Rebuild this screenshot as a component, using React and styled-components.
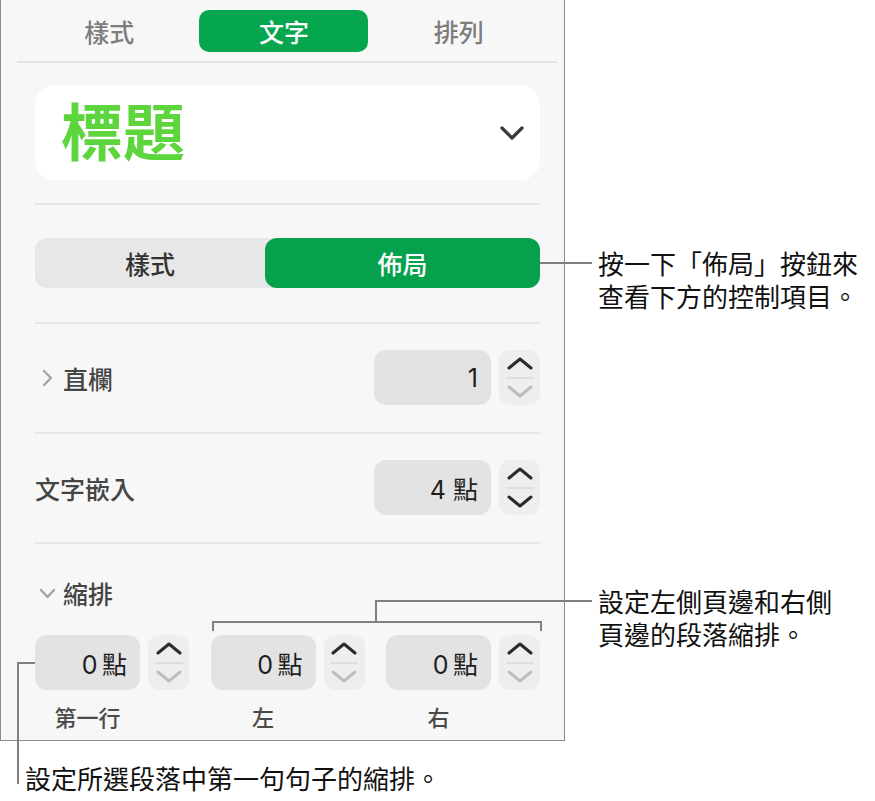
import React from 'react'
import styled, { createGlobalStyle } from 'styled-components'

const GlobalStyle = createGlobalStyle`
  html, body {
    margin: 0;
    padding: 0;
    background: #ffffff;
  }
  body {
    font-family: "Inter", "Noto Sans CJK TC", sans-serif;
    color: #1a1a1a;
  }
`

const fieldRows = [
  { label: '第一行', value: '0\u2009點' },
  { label: '左', value: '0\u2009點' },
  { label: '右', value: '0\u2009點' },
]

function Chevron({ dir = 'down', color = '#333', width = 26, height = 13, stroke = 3 }) {
  const pts = dir === 'up'
    ? `2,${height - 2} ${width / 2},2 ${width - 2},${height - 2}`
    : dir === 'right'
      ? `2,2 ${width - 2},${height / 2} 2,${height - 2}`
      : `2,2 ${width / 2},${height - 2} ${width - 2},2`
  return (
    <svg width={width} height={height} viewBox={`0 0 ${width} ${height}`}>
      <polyline points={pts} fill="none" stroke={color} strokeWidth={stroke}
        strokeLinecap="round" strokeLinejoin="round" />
    </svg>
  )
}

function Stepper({ downEnabled }) {
  return (
    <StepBox>
      <StepHalf>
        <Chevron dir="up" color="#2b2b2b" />
      </StepHalf>
      <StepLine />
      <StepHalf>
        <Chevron dir="down" color={downEnabled ? '#2b2b2b' : '#bdbdbd'} />
      </StepHalf>
    </StepBox>
  )
}

export default function App() {
  return (
    <>
      <GlobalStyle />
      <Page>
        <Panel>
          <Tabs>
            <Tab>樣式</Tab>
            <Tab active>文字</Tab>
            <Tab>排列</Tab>
          </Tabs>
          <TabRule />

          <Content>
            <TitleCard>
              <TitleText>標題</TitleText>
              <Chevron dir="down" color="#3a3a3a" width={24} height={14} stroke={3.2} />
            </TitleCard>
            <Rule />

            <Segmented>
              <Segment>樣式</Segment>
              <Segment active>佈局</Segment>
            </Segmented>
            <Rule />

            <Row>
              <RowLabel>
                <Disclosure><Chevron dir="right" color="#a5a5a5" width={11} height={18} stroke={2.4} /></Disclosure>
                直欄
              </RowLabel>
              <Control>
                <Field>1</Field>
                <Stepper />
              </Control>
            </Row>
            <Rule />

            <Row>
              <RowLabel>文字嵌入</RowLabel>
              <Control>
                <Field>4 點</Field>
                <Stepper downEnabled />
              </Control>
            </Row>
            <Rule />

            <IndentHead>
              <Disclosure><Chevron dir="down" color="#a5a5a5" width={17} height={11} stroke={2.4} /></Disclosure>
              縮排
            </IndentHead>
            <IndentGrid>
              {fieldRows.map(f => (
                <IndentCell key={f.label}>
                  <Control>
                    <Field small>{f.value}</Field>
                    <Stepper />
                  </Control>
                  <CellLabel>{f.label}</CellLabel>
                </IndentCell>
              ))}
            </IndentGrid>
          </Content>
        </Panel>

        {/* callout: layout button */}
        <HLine style={{ left: 540, top: 262, width: 52 }} />
        <Note style={{ left: 598, top: 246 }}>
          按一下「佈局」按鈕來<br />查看下方的控制項目。
        </Note>

        {/* callout: left / right indents */}
        <HLine style={{ left: 376, top: 600, width: 216 }} />
        <VLine style={{ left: 375, top: 600, height: 23 }} />
        <HLine style={{ left: 212, top: 621, width: 330 }} />
        <VLine style={{ left: 212, top: 621, height: 10 }} />
        <VLine style={{ left: 540, top: 621, height: 10 }} />
        <Note style={{ left: 598, top: 584 }}>
          設定左側頁邊和右側<br />頁邊的段落縮排。
        </Note>

        {/* callout: first line */}
        <HLine style={{ left: 17, top: 662, width: 18 }} />
        <VLine style={{ left: 17, top: 662, height: 122 }} />
        <Note style={{ left: 25, top: 761 }}>
          設定所選段落中第一句句子的縮排。
        </Note>
      </Page>
    </>
  )
}

const Page = styled.div`
  position: relative;
  width: 875px;
  height: 801px;
  overflow: hidden;
`

const Panel = styled.div`
  box-sizing: border-box;
  width: 565px;
  height: 741px;
  background: #f7f7f7;
  border: 1px solid #8c8c8c;
  border-top: none;
`

const Tabs = styled.div`
  display: grid;
  grid-template-columns: repeat(3, 1fr);
  padding: 10px 18px 0 21px;
`

const Tab = styled.div`
  justify-self: center;
  width: 169px;
  height: 42px;
  border-radius: 10px;
  display: flex;
  align-items: center;
  justify-content: center;
  font-size: 25px;
  font-weight: 500;
  color: ${p => (p.active ? '#ffffff' : '#7d7d7d')};
  background: ${p => (p.active ? '#05a64e' : 'transparent')};
`

const TabRule = styled.div`
  height: 2px;
  margin: 9px 7px 0 16px;
  background: #e3e3e3;
`

const Content = styled.div`
  padding: 0 24px 0 34px;
`

const Rule = styled.div`
  height: 2px;
  background: #e6e6e6;
`

const TitleCard = styled.div`
  margin: 22px 0 23px;
  height: 95px;
  background: #ffffff;
  border-radius: 20px;
  display: flex;
  align-items: center;
  justify-content: space-between;
  padding: 0 16px 0 26px;
  box-sizing: border-box;
`

const TitleText = styled.div`
  font-size: 62px;
  font-weight: 700;
  color: #5dd53c;
  line-height: 1;
  margin-top: 2px;
`

const Segmented = styled.div`
  margin: 33px 0 34px;
  height: 50px;
  display: grid;
  grid-template-columns: 230px 1fr;
  background: #e7e7e7;
  border-radius: 12px;
`

const Segment = styled.div`
  display: flex;
  align-items: center;
  justify-content: center;
  border-radius: 12px;
  font-size: 25px;
  font-weight: 500;
  color: ${p => (p.active ? '#ffffff' : '#333333')};
  background: ${p => (p.active ? '#06a14d' : 'transparent')};
`

const Row = styled.div`
  display: flex;
  align-items: center;
  justify-content: space-between;
  padding: 26px 0 27px;
`

const RowLabel = styled.div`
  display: flex;
  align-items: center;
  font-size: 25px;
  font-weight: 500;
  color: #454545;
`

const Disclosure = styled.span`
  display: inline-flex;
  align-items: center;
  justify-content: center;
  width: 32px;
  margin-left: -4px;
`

const Control = styled.div`
  display: flex;
  align-items: center;
  gap: 8px;
`

const Field = styled.div`
  box-sizing: border-box;
  width: ${p => (p.small ? '105px' : '117px')};
  height: 55px;
  border-radius: 12px;
  background: #e3e3e3;
  display: flex;
  align-items: center;
  justify-content: flex-end;
  padding-right: 13px;
  font-size: 25px;
  color: #1e1e1e;
`

const StepBox = styled.div`
  width: 41px;
  height: 55px;
  border-radius: 11px;
  background: #eeeeee;
  display: flex;
  flex-direction: column;
  align-items: center;
`

const StepHalf = styled.div`
  flex: 1;
  display: flex;
  align-items: center;
  justify-content: center;
`

const StepLine = styled.div`
  width: 28px;
  height: 2px;
  background: #dedede;
`

const IndentHead = styled.div`
  display: flex;
  align-items: center;
  font-size: 25px;
  font-weight: 500;
  color: #454545;
  margin-top: 33px;
  height: 32px;
`

const IndentGrid = styled.div`
  display: flex;
  justify-content: space-between;
  margin-top: 26px;
`

const IndentCell = styled.div`
  display: flex;
  flex-direction: column;
`

const CellLabel = styled.div`
  width: 105px;
  text-align: center;
  font-size: 22px;
  font-weight: 500;
  color: #4a4a4a;
  margin-top: 10px;
`

const HLine = styled.div`
  position: absolute;
  height: 2px;
  background: #808080;
`

const VLine = styled.div`
  position: absolute;
  width: 2px;
  background: #808080;
`

const Note = styled.div`
  position: absolute;
  font-family: "Noto Sans CJK TC", sans-serif;
  font-size: 26px;
  line-height: 33px;
  color: #111111;
  white-space: nowrap;
`
